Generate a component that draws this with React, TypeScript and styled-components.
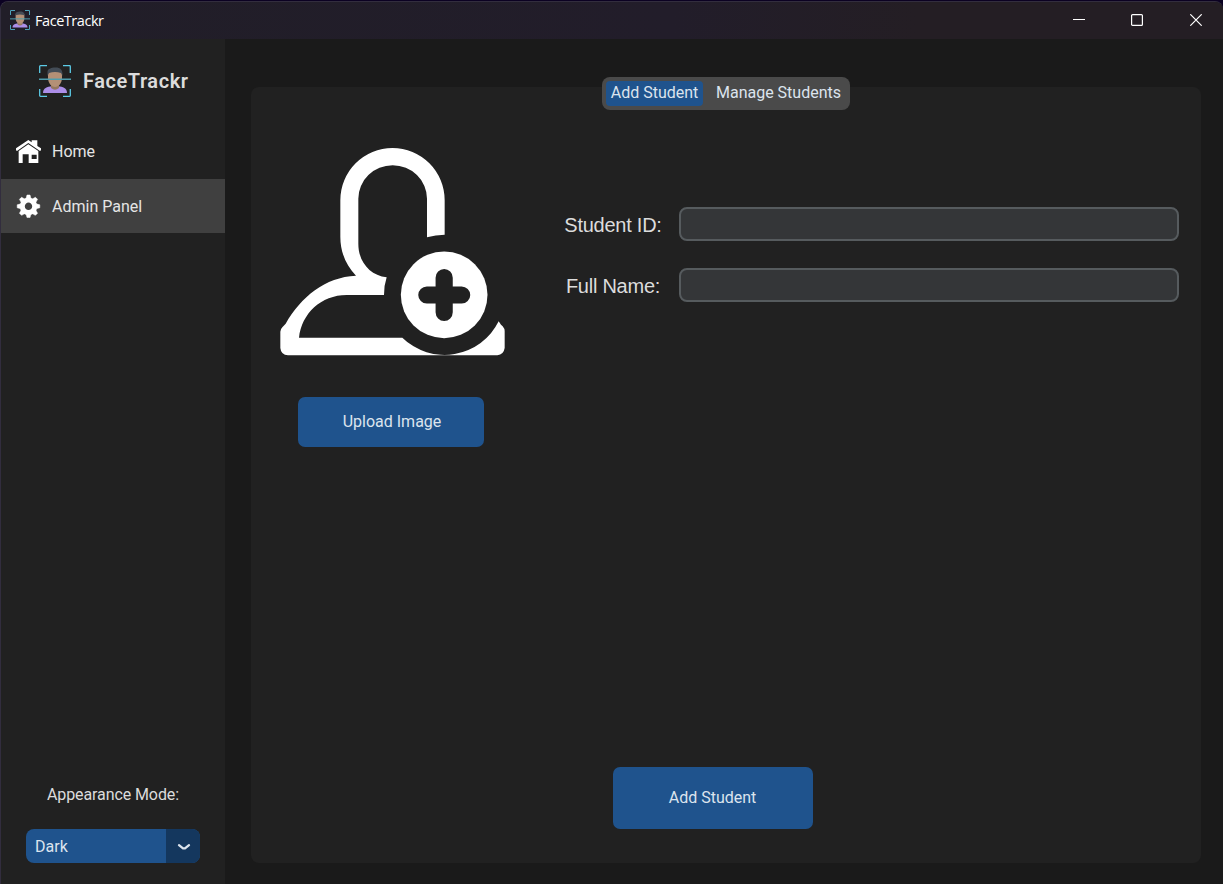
import React from "react";
import styled, { createGlobalStyle } from "styled-components";

const GlobalStyle = createGlobalStyle`
  * { box-sizing: border-box; }
  body { margin: 0; background: #1a1a1a; overflow: hidden; }
  button, input { font: inherit; }
`;

const Backdrop = styled.div`
  width: 1223px;
  height: 884px;
  padding-top: 1px;
  background: linear-gradient(#0b0122 0 20px, #1a1a1a 20px);
`;

const Window = styled.div`
  height: 883px;
  display: flex;
  flex-direction: column;
  border: solid #322d3e;
  border-width: 1px 0 0 1px;
  border-radius: 8px 8px 0 0;
  overflow: hidden;
  background: #1a1a1a;
  font-family: Roboto, sans-serif;
  font-size: 16px;
  color: #dce4ee;
`;

const TitleBar = styled.header`
  flex: 0 0 37px;
  display: flex;
  align-items: center;
  padding: 0 0 2px 9px;
  background: linear-gradient(90deg, #211e28, #221d2a 55%, #241e24 75%, #241e24);
`;

const WindowTitle = styled.span`
  flex: 1;
  padding: 2px 0 0 5px;
  font: 14.5px/20px "Open Sans", sans-serif;
  letter-spacing: -0.45px;
  color: #fff;
`;

const WindowControls = styled.div`
  display: flex;
  margin-right: -2px;
`;

const WindowControl = styled.button`
  width: 58.5px;
  height: 35px;
  padding: 0;
  border: 0;
  background: transparent;
  display: flex;
  align-items: center;
  justify-content: center;
  svg { display: block; }
`;

const Body = styled.div`
  flex: 1;
  display: flex;
`;

const Sidebar = styled.aside`
  width: 224px;
  display: flex;
  flex-direction: column;
  background: #212121;
`;

const Brand = styled.div`
  height: 85px;
  display: flex;
  align-items: center;
  gap: 12px;
  padding: 0 0 2px 38px;
  font-size: 20px;
  font-weight: 600;
  letter-spacing: 0.55px;
  color: #dcdcdc;
`;

const NavItem = styled.a<{ $active?: boolean }>`
  height: 54px;
  margin-bottom: 1px;
  display: flex;
  align-items: center;
  gap: 11px;
  padding-left: 15px;
  color: #e5e5e5;
  background: ${(p) => (p.$active ? "#404040" : "transparent")};
`;

const Appearance = styled.div`
  margin-top: auto;
  padding: 0 25px 21px;
  display: flex;
  flex-direction: column;
  gap: 25px;
  color: #dcdcdc;
`;

const AppearanceLabel = styled.span`
  line-height: 19px;
  letter-spacing: -0.1px;
  text-align: center;
`;

const Select = styled.div`
  height: 34px;
  display: flex;
  border-radius: 8px;
  overflow: hidden;
  line-height: 35px;
  background: #1f538d;
  color: #dce4ee;
`;

const SelectValue = styled.span`
  width: 140px;
  padding-left: 9px;
`;

const SelectArrow = styled.span`
  flex: 1;
  display: flex;
  align-items: center;
  justify-content: center;
  padding: 1px 0 0 2px;
  background: #14375e;
`;

const Main = styled.main`
  flex: 1;
  padding: 38px 22px 21px 26px;
  display: flex;
  flex-direction: column;
`;

const Tabs = styled.nav`
  position: relative;
  z-index: 1;
  align-self: center;
  width: 248px;
  height: 33px;
  margin-bottom: -23px;
  padding: 4px;
  display: flex;
  justify-content: space-between;
  border-radius: 8px;
  background: #4a4a4a;
`;

const Tab = styled.button<{ $active?: boolean; $width: number }>`
  width: ${(p) => p.$width}px;
  height: 25px;
  padding: 0 0 2px;
  border: 0;
  border-radius: 4px;
  white-space: nowrap;
  color: #dce4ee;
  background: ${(p) => (p.$active ? "#1f538d" : "transparent")};
`;

const Panel = styled.section`
  flex: 1;
  display: flex;
  flex-direction: column;
  border-radius: 8px;
  background: #212121;
`;

const Entry = styled.div`
  flex: 1;
  display: flex;
  padding: 61px 22px 0 29px;
`;

const Photo = styled.div`
  width: 225px;
  display: flex;
  flex-direction: column;
  align-items: center;
  gap: 41px;
`;

const Action = styled.button<{ $w: number; $h: number }>`
  width: ${(p) => p.$w}px;
  height: ${(p) => p.$h}px;
  padding: 0 1px 1px 0;
  border: 0;
  border-radius: 7px;
  background: #1f538d;
  color: #dce4ee;
`;

const UploadButton = styled(Action)`
  margin-right: 3px;
  padding: 0 0 1px 2px;
`;

const AddButton = styled(Action)`
  align-self: center;
  margin: 0 26px 34px 0;
`;

const Fields = styled.form`
  flex: 1;
  padding: 59px 0 0 50px;
  display: flex;
  flex-direction: column;
  gap: 27px;
`;

const Field = styled.label`
  display: flex;
  align-items: center;
`;

const FieldName = styled.span`
  flex: 1;
  text-align: center;
  padding-right: 8px;
  padding-top: 2px;
  font: 20px/24px "Liberation Sans", sans-serif;
  letter-spacing: -0.25px;
  color: #dcdcdc;
`;

const Input = styled.input`
  width: 500px;
  height: 34px;
  border: 2px solid #565b5e;
  border-radius: 8px;
  background: #343638;
  outline: none;
`;

const Logo = ({ size }: { size: number }) => (
  <svg width={size} height={size} viewBox="0 0 32 32" fill="none">
    <path d="M4 28c0-5 4-6 9-7h6c5 1 9 2 9 7z" fill="#ac8ee8" />
    <path d="M12 17h8v6q-4 3.500-8 0z" fill="#95785f" />
    <path d="M9 8q0-4 7-4t7 4v5c0 5-3.500 9-7 9s-7-4-7-9z" fill="#b49076" />
    <path d="M8.500 11V7c0-3 3-4.500 8-4.500S24 5 23.500 11L22 8Q16 6 10 8z" fill="#434c56" />
    <path d="M0 14.200h32" stroke="#4e9dad" strokeWidth="1.600" />
    <path d="M.7 8V1.500Q.7.700 1.500.7H8M24 .7h6.500q.8 0 .8.800V8M31.300 24v6.500q0 .8-.8.800H24M8 31.300H1.500q-.8 0-.8-.8V24" stroke="#5ccbe6" strokeWidth="1.300" />
  </svg>
);

const HomeIcon = () => (
  <svg width="25" height="24" viewBox="0 0 75 72" fill="#fff">
    <path d="M0 28 37 3 47 10V4h17v17l11 7v6L72 36 37 12 3 36 0 34z" />
    <path fillRule="evenodd" d="M8 36 37 16 67 36V72H38V46H20V72H8zM47 47V60H62V47z" />
  </svg>
);

const GearIcon = () => (
  <svg width="25" height="24" viewBox="-12.500 -12.300 25 24">
    <circle r="6.200" fill="none" stroke="#fff" strokeWidth="5" />
    {[0, 45, 90, 135, 180, 225, 270, 315].map((angle) => (
      <path key={angle} d="M-2.500-7.700-1.500-11.300H1.500L2.500-7.700z" fill="#fff" stroke="#fff" strokeWidth=".5" strokeLinejoin="round" transform={`rotate(${angle})`} />
    ))}
  </svg>
);

const AddPersonIcon = () => (
  <svg width="225" height="208" viewBox="45 38 675 624">
    <path
      fill="#fff"
      d="M539 298V195A156.500 157 0 0 0 226 195V305C226 350 243 390 273 421C180 425 108 485 62 565L52 576Q46 582 46 589V638Q48 659 69 660H697Q716 658 719 638V587Q719 580 713 573L708 568 701 558A181 181 0 0 1 412 607H102C110 535 168 479 245 479H357Q357 450 365 426C315 420 280 380 280 325V190A103 100 0 0 1 486 190V306Q512 298 539 298Z"
    />
    <circle cx="537.500" cy="478.500" r="130" fill="#fff" />
    <path d="M485.500 479H590M537.500 427V531" stroke="#212121" strokeWidth="51.500" strokeLinecap="round" />
  </svg>
);

export default function App() {
  return (
    <Backdrop>
      <GlobalStyle />
      <Window>
        <TitleBar>
          <Logo size={20} />
          <WindowTitle>FaceTrackr</WindowTitle>
          <WindowControls>
            <WindowControl aria-label="Minimize">
              <svg width="12" height="12"><path d="M0 5.500H12" stroke="#fff" /></svg>
            </WindowControl>
            <WindowControl aria-label="Maximize">
              <svg width="12" height="12"><rect x=".6" y=".6" width="10.800" height="10.800" rx="1" fill="none" stroke="#fff" strokeWidth="1.200" /></svg>
            </WindowControl>
            <WindowControl aria-label="Close">
              <svg width="12" height="12"><path d="M.3.300 11.700 11.700M11.700.300.300 11.700" stroke="#fff" strokeWidth="1.200" /></svg>
            </WindowControl>
          </WindowControls>
        </TitleBar>
        <Body>
          <Sidebar>
            <Brand><Logo size={32} />FaceTrackr</Brand>
            <NavItem><HomeIcon />Home</NavItem>
            <NavItem $active><GearIcon />Admin Panel</NavItem>
            <Appearance>
              <AppearanceLabel>Appearance Mode:</AppearanceLabel>
              <Select>
                <SelectValue>Dark</SelectValue>
                <SelectArrow>
                  <svg width="14" height="8"><path d="M2 2.200 6 5.300H8L12 2.200" fill="none" stroke="#dce4ee" strokeWidth="2.300" strokeLinecap="round" strokeLinejoin="round" /></svg>
                </SelectArrow>
              </Select>
            </Appearance>
          </Sidebar>
          <Main>
            <Tabs>
              <Tab $active $width={97}>Add Student</Tab>
              <Tab $width={135}>Manage Students</Tab>
            </Tabs>
            <Panel>
              <Entry>
                <Photo>
                  <AddPersonIcon />
                  <UploadButton type="button" $w={186} $h={50}>Upload Image</UploadButton>
                </Photo>
                <Fields>
                  <Field><FieldName>Student ID:</FieldName><Input /></Field>
                  <Field><FieldName>Full Name:</FieldName><Input /></Field>
                </Fields>
              </Entry>
              <AddButton type="button" $w={200} $h={62}>Add Student</AddButton>
            </Panel>
          </Main>
        </Body>
      </Window>
    </Backdrop>
  );
}
